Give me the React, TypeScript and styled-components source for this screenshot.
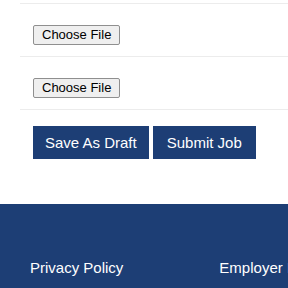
import styled, { createGlobalStyle } from "styled-components";

const GlobalStyle = createGlobalStyle`
  html, body {
    margin: 0;
    padding: 0;
    background: #ffffff;
    font-family: "Liberation Sans", Arial, sans-serif;
  }
`;

const Page = styled.div`
  display: flex;
  flex-direction: column;
  min-height: 288px;
  overflow: hidden;
`;

const Form = styled.div`
  padding-top: 3px;
  margin-left: 20px;
`;

const FieldRow = styled.div`
  border-top: 1px solid #ececec;
  padding: 21px 13px 11px;
  line-height: 0;
  &:last-of-type {
    border-bottom: 1px solid #ececec;
  }
`;

const FileButton = styled.button`
  height: 20px;
  padding: 0 8px;
  font-family: "Liberation Sans", Arial, sans-serif;
  font-size: 13px;
  line-height: 18px;
  color: #000;
  background: #efefef;
  border: 1px solid #8f8f8f;
  border-radius: 2px;
  cursor: pointer;
`;

const Actions = styled.div`
  display: flex;
  gap: 4px;
  padding: 16px 0 0 33px;
  height: 33px;
  margin-bottom: 45px;
`;

const ActionButton = styled.button<{ $pad: number }>`
  height: 33px;
  padding: 0 ${(p) => p.$pad}px;
  border: none;
  background: #1d3e75;
  color: #fff;
  font-family: "Liberation Sans", Arial, sans-serif;
  font-size: 15px;
  cursor: pointer;
`;

const Footer = styled.footer`
  flex: 1;
  background: #1d3e75;
  display: flex;
  gap: 96px;
  padding: 55px 0 0 30px;
  white-space: nowrap;
`;

const FooterLink = styled.a`
  color: #fff;
  font-size: 15px;
  text-decoration: none;
`;

export default function App() {
  return (
    <Page>
      <GlobalStyle />
      <Form>
        <FieldRow>
          <FileButton type="button">Choose File</FileButton>
        </FieldRow>
        <FieldRow>
          <FileButton type="button">Choose File</FileButton>
        </FieldRow>
      </Form>
      <Actions>
        <ActionButton type="button" $pad={12}>
          Save As Draft
        </ActionButton>
        <ActionButton type="button" $pad={14}>
          Submit Job
        </ActionButton>
      </Actions>
      <Footer>
        <FooterLink href="#">Privacy Policy</FooterLink>
        <FooterLink href="#">Employer Login</FooterLink>
      </Footer>
    </Page>
  );
}
